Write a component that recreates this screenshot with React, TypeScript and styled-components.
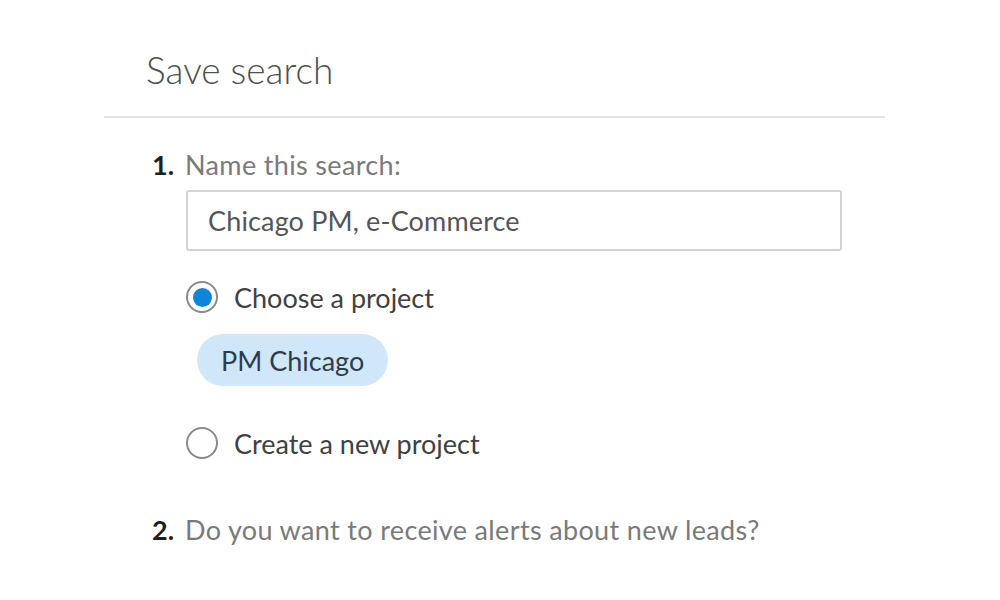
import React, { useState } from "react";
import styled, { createGlobalStyle } from "styled-components";

const GlobalStyle = createGlobalStyle`
  html, body {
    margin: 0;
    padding: 0;
    background: #ffffff;
  }
  body {
    font-family: Lato, "Open Sans", "Liberation Sans", sans-serif;
  }
`;

const Panel = styled.div`
  width: 781px;
  margin-left: 104px;
`;

const Header = styled.div`
  padding: 47px 0 23px 42px;
  border-bottom: 2px solid #e3e3e3;
`;

const Title = styled.h2`
  margin: 0;
  font-size: 37px;
  line-height: 46px;
  font-weight: 300;
  color: #4f4f4f;
`;

const Body = styled.div`
  padding: 32px 0 0 48px;
`;

const Step = styled.div<{ gapTop?: number }>`
  margin-top: ${p => p.gapTop ?? 0}px;
`;

const StepLabel = styled.div`
  display: flex;
  align-items: baseline;
  font-size: 27px;
  line-height: 30px;
`;

const StepNumber = styled.span`
  width: 33px;
  font-weight: 700;
  color: #1f1f1f;
`;

const StepText = styled.span`
  color: #7a7a7a;
  letter-spacing: 0.35px;
`;

const StepContent = styled.div`
  padding-left: 34px;
  display: flex;
  flex-direction: column;
`;

const TextInput = styled.input`
  box-sizing: border-box;
  margin-top: 10px;
  width: 656px;
  height: 61px;
  padding: 0 20px;
  border: 2px solid #d3d3d3;
  border-radius: 3px;
  font-family: inherit;
  font-size: 27px;
  letter-spacing: 0.15px;
  color: #555555;
  outline: none;
`;

const Option = styled.label<{ gapTop: number }>`
  display: flex;
  align-items: center;
  gap: 16px;
  margin-top: ${p => p.gapTop}px;
  height: 32px;
  font-size: 27px;
  color: #414141;
  cursor: pointer;
`;

const RadioMark = styled.span<{ checked: boolean }>`
  box-sizing: border-box;
  width: 32px;
  height: 32px;
  flex: none;
  border-radius: 50%;
  border: 2px solid #8a8a8a;
  display: flex;
  align-items: center;
  justify-content: center;
  &::after {
    content: "";
    width: 19px;
    height: 19px;
    border-radius: 50%;
    background: ${p => (p.checked ? "#0b86d9" : "transparent")};
  }
`;

const Pill = styled.span`
  align-self: flex-start;
  margin: 21px 0 0 11px;
  height: 52px;
  padding: 0 24px;
  display: flex;
  align-items: center;
  border-radius: 26px;
  background: #cfe7f9;
  color: #2e3d4b;
  font-size: 27px;
`;

const App = () => {
  const [name, setName] = useState("Chicago PM, e-Commerce");
  const [mode, setMode] = useState<"choose" | "create">("choose");

  return (
    <>
      <GlobalStyle />
      <Panel>
        <Header>
          <Title>Save search</Title>
        </Header>
        <Body>
          <Step>
            <StepLabel>
              <StepNumber>1.</StepNumber>
              <StepText>Name this search:</StepText>
            </StepLabel>
            <StepContent>
              <TextInput value={name} onChange={e => setName(e.target.value)} />
              <Option gapTop={30} onClick={() => setMode("choose")}>
                <RadioMark checked={mode === "choose"} />
                Choose a project
              </Option>
              {mode === "choose" && <Pill>PM Chicago</Pill>}
              <Option gapTop={41} onClick={() => setMode("create")}>
                <RadioMark checked={mode === "create"} />
                Create a new project
              </Option>
            </StepContent>
          </Step>
          <Step gapTop={56}>
            <StepLabel>
              <StepNumber>2.</StepNumber>
              <StepText>Do you want to receive alerts about new leads?</StepText>
            </StepLabel>
          </Step>
        </Body>
      </Panel>
    </>
  );
};

export default App;
